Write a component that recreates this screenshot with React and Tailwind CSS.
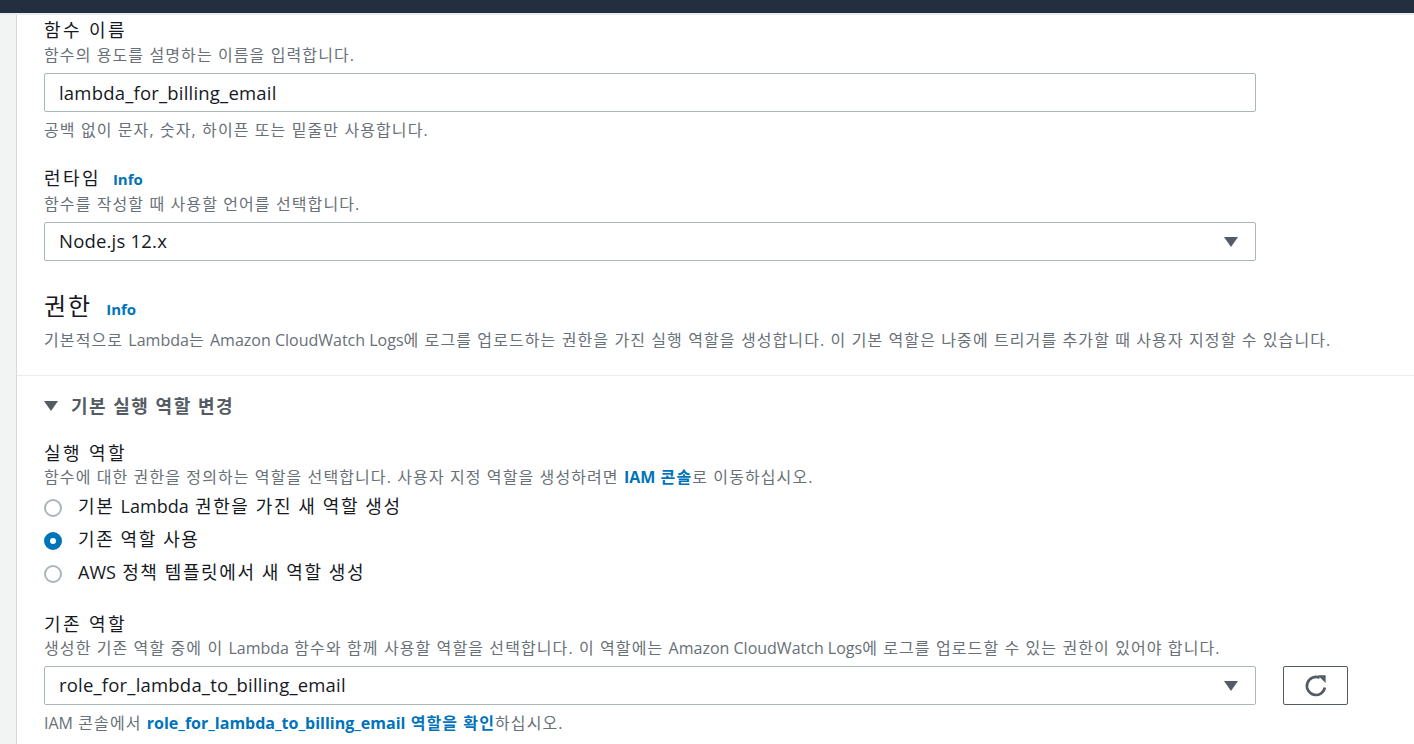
import React from "react";

function Caret() {
  return (
    <svg width="14" height="10" viewBox="0 0 14 10" className="shrink-0">
      <polygon points="0,0 14,0 7,10" fill="#545b64" />
    </svg>
  );
}

const L = ({ children, className = "" }) => (
  <span className={"tracking-normal " + className}>{children}</span>
);

function Select({ value, className = "" }) {
  return (
    <div className={"h-[39px] border border-[#aab7b8] rounded-[2px] flex items-center pl-[14px] pr-[17px] " + className}>
      <span className="flex-1 text-[18.5px] tracking-[0.2px] text-[#16191f] leading-none">{value}</span>
      <Caret />
    </div>
  );
}

function Radio({ checked, children }) {
  return (
    <div className="h-[33px] flex items-center">
      {checked ? (
        <span className="w-[18px] h-[18px] rounded-full border-[6px] border-[#0073bb] bg-white shrink-0" />
      ) : (
        <span className="w-[18px] h-[18px] rounded-full border-2 border-[#aab7b8] bg-white shrink-0" />
      )}
      <span className="ml-[16px] -mt-[3px] text-[18px] leading-[24px] tracking-[1.6px] text-[#16191f]">{children}</span>
    </div>
  );
}

const Label = ({ children }) => (
  <div className="text-[18px] leading-[24px] tracking-[2.4px] text-[#16191f] flex items-baseline">{children}</div>
);
const Desc = ({ children, className = "" }) => (
  <div className={"text-[16px] leading-[22px] tracking-[1.1px] text-[#687078] " + className}>{children}</div>
);
const Info = ({ className = "" }) => (
  <span className={"text-[15px] font-bold tracking-normal text-[#0073bb] " + className}>Info</span>
);

export default function App() {
  return (
    <div className="h-screen overflow-hidden bg-white flex flex-col font-['Open_Sans','Noto_Sans_CJK_KR',sans-serif]">
      <div className="h-[13px] bg-[#232f3e] shrink-0" />
      <div className="h-[2px] bg-[#eaeded] shrink-0" />
      <div className="flex flex-1">
        <div className="w-[17px] bg-[#f2f3f3] border-r border-[#d5dbdb] shrink-0" />
        <div className="flex-1 flex flex-col">
          <section className="pl-[27px] pt-[3px] pb-[24px] border-b border-[#eaeded]">
            <Label>함수 이름</Label>
            <Desc className="mt-[2px]">함수의 용도를 설명하는 이름을 입력합니다.</Desc>
            <div className="mt-[7px] w-[1212px] h-[39px] border border-[#aab7b8] rounded-[2px] flex items-center pl-[14px] text-[18.5px] tracking-[0.2px] text-[#16191f]">
              lambda_for_billing_email
            </div>
            <Desc className="mt-[7px]">공백 없이 문자, 숫자, 하이픈 또는 밑줄만 사용합니다.</Desc>

            <div className="mt-[25px]">
              <Label>
                런타임<Info className="ml-[12px]" />
              </Label>
            </div>
            <Desc className="mt-[2px]">함수를 작성할 때 사용할 언어를 선택합니다.</Desc>
            <Select value="Node.js 12.x" className="mt-[7px] w-[1212px]" />

            <div className="mt-[29px] h-[32px] flex items-baseline text-[24px] leading-[32px] tracking-[2px] text-[#16191f]">
              권한<Info className="ml-[14px]" />
            </div>
            <Desc className="mt-[7px]">
              기본적으로 <L>Lambda</L>는 <L>Amazon CloudWatch Logs</L>에 로그를 업로드하는 권한을 가진 실행 역할을 생성합니다. 이 기본 역할은 나중에 트리거를 추가할 때 사용자 지정할 수 있습니다.
            </Desc>
          </section>

          <section className="pl-[27px] pt-[18px]">
            <div className="h-[24px] flex items-center">
              <Caret />
              <span className="ml-[13px] text-[18px] leading-[24px] tracking-[1.5px] font-bold text-[#545b64]">기본 실행 역할 변경</span>
            </div>

            <div className="mt-[23px]">
              <Label>실행 역할</Label>
            </div>
            <Desc className="mt-[1px]">
              함수에 대한 권한을 정의하는 역할을 선택합니다. 사용자 지정 역할을 생성하려면{" "}
              <span className="font-bold text-[#0073bb]"><L>IAM</L> 콘솔</span>로 이동하십시오.
            </Desc>
            <div className="mt-[3px]">
              <Radio>기본 <L>Lambda</L> 권한을 가진 새 역할 생성</Radio>
              <Radio checked>기존 역할 사용</Radio>
              <Radio><L>AWS</L> 정책 템플릿에서 새 역할 생성</Radio>
            </div>

            <div className="mt-[22px]">
              <Label>기존 역할</Label>
            </div>
            <Desc className="mt-[1px]">
              생성한 기존 역할 중에 이 <L>Lambda</L> 함수와 함께 사용할 역할을 선택합니다. 이 역할에는 <L>Amazon CloudWatch Logs</L>에 로그를 업로드할 수 있는 권한이 있어야 합니다.
            </Desc>
            <div className="mt-[7px] flex items-center">
              <Select value="role_for_lambda_to_billing_email" className="w-[1212px]" />
              <button className="ml-[27px] w-[65px] h-[39px] border border-[#545b64] rounded-[2px] bg-white flex items-center justify-center">
                <svg width="24" height="24" viewBox="0 0 24 24">
                  <path
                    d="M20.8 13.5A9 9 0 1 1 15.6 3.75"
                    fill="none"
                    stroke="#545b64"
                    strokeWidth="2.7"
                  />
                  <polygon points="13.8,1.2 21.6,1.2 21.6,9" fill="#545b64" />
                </svg>
              </button>
            </div>
            <Desc className="mt-[7px]">
              <L>IAM</L> 콘솔에서{" "}
              <span className="font-bold text-[#0073bb]"><L>role_for_lambda_to_billing_email</L> 역할을 확인</span>하십시오.
            </Desc>
          </section>
        </div>
      </div>
    </div>
  );
}
